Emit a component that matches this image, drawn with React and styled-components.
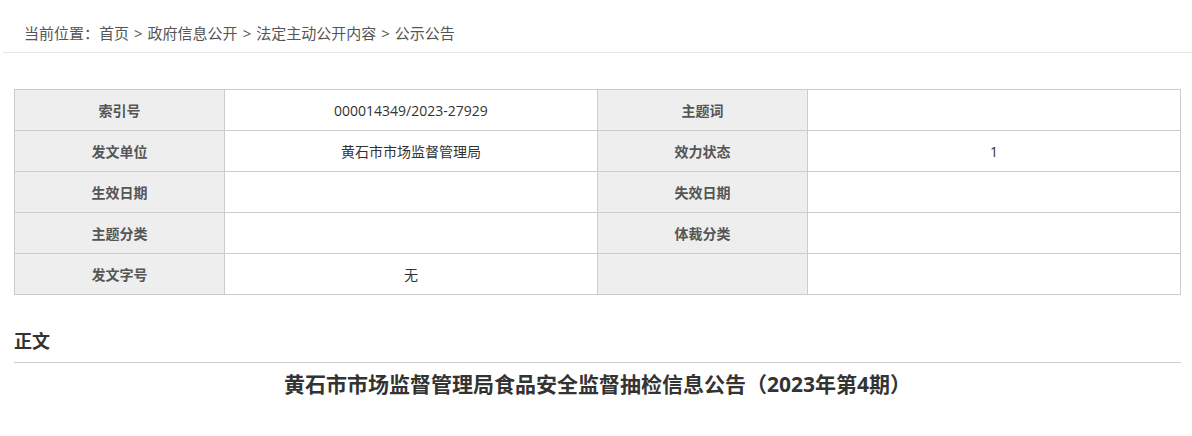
import React from 'react';
import styled, { createGlobalStyle } from 'styled-components';

const GlobalStyle = createGlobalStyle`
    html, body{
        margin: 0;
        padding: 0;
        background: #ffffff;
        font-family: 'Open Sans', 'Noto Sans CJK SC', sans-serif;
    }
`

const Page = styled.div`
    width: 1192px;
    min-height: 436px;
    background: #ffffff;
`

const Breadcrumb = styled.div`
    margin-left: 3px;
    padding: 23px 0 0 21px;
    height: 53px;
    box-sizing: border-box;
    border-bottom: 1px solid #e5e5e5;
    font-size: 15px;
    line-height: 20px;
    color: #555555;

    .sep{
        margin: 0 5px;
    }
`

const Content = styled.div`
    padding: 36px 11px 0 14px;
`

const InfoTable = styled.table`
    width: 100%;
    border-collapse: collapse;
    table-layout: fixed;
    font-size: 14px;
`

const Cell = styled.td`
    height: 41px;
    box-sizing: border-box;
    padding: 0;
    border: 1px solid #cccccc;
    text-align: center;
    vertical-align: middle;
    background: ${props => props.label ? '#eeeeee' : '#ffffff'};
    color: ${props => props.label ? '#555555' : '#333333'};
    font-weight: ${props => props.label ? 'bold' : 'normal'};
    width: ${props => props.label ? '18%' : '32%'};
`

const Heading = styled.div`
    margin-top: 34px;
    padding-bottom: 9px;
    border-bottom: 1px solid #cccccc;
    font-size: 18px;
    line-height: 24px;
    font-weight: bold;
    color: #333333;
`

const Title = styled.h1`
    margin: 6px 0 0;
    text-align: center;
    font-size: 21px;
    line-height: 30px;
    font-weight: bold;
    color: #333333;
`

const rows = [
    ['索引号', '000014349/2023-27929', '主题词', ''],
    ['发文单位', '黄石市市场监督管理局', '效力状态', '1'],
    ['生效日期', '', '失效日期', ''],
    ['主题分类', '', '体裁分类', ''],
    ['发文字号', '无', '', ''],
]

const crumbs = ['首页', '政府信息公开', '法定主动公开内容', '公示公告']

const App = () => {
    return(
        <Page>
            <GlobalStyle />
            <Breadcrumb>
                当前位置：
                {crumbs.map((c, i) => (
                    <React.Fragment key={c}>
                        {i > 0 && <span className="sep">&gt;</span>}
                        {c}
                    </React.Fragment>
                ))}
            </Breadcrumb>
            <Content>
                <InfoTable>
                    <tbody>
                        {rows.map((r, i) => (
                            <tr key={i}>
                                <Cell label>{r[0]}</Cell>
                                <Cell>{r[1]}</Cell>
                                <Cell label>{r[2]}</Cell>
                                <Cell>{r[3]}</Cell>
                            </tr>
                        ))}
                    </tbody>
                </InfoTable>
                <Heading>正文</Heading>
                <Title>黄石市市场监督管理局食品安全监督抽检信息公告（2023年第4期）</Title>
            </Content>
        </Page>
    )
}

export default App;
